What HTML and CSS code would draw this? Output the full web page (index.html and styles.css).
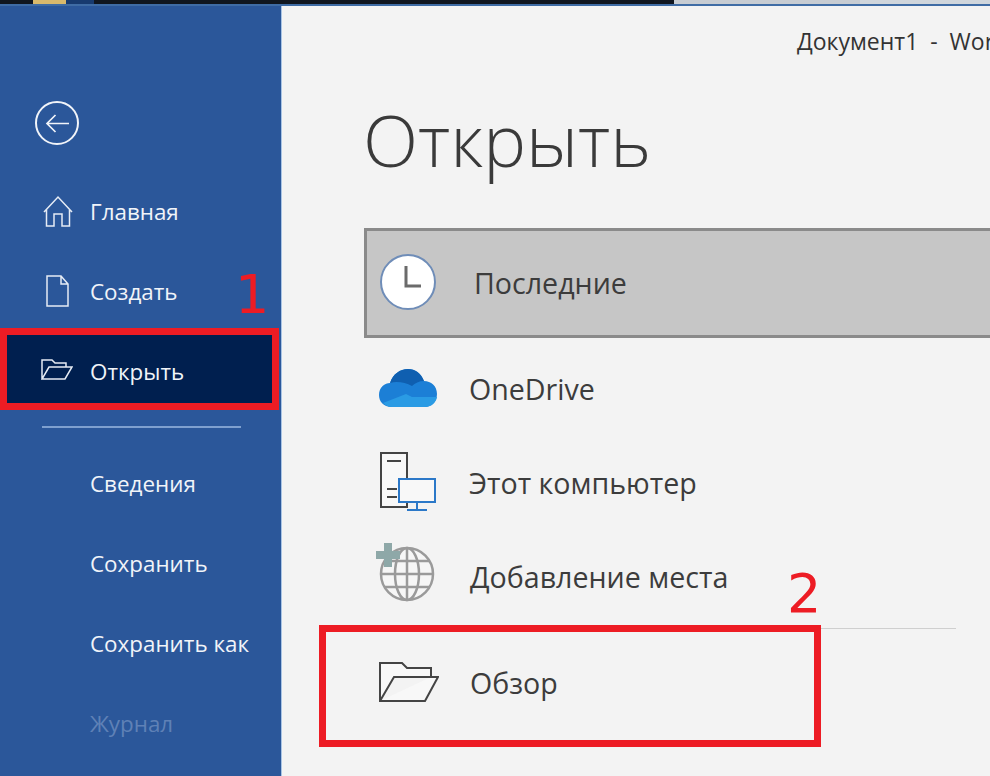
FILE: index.html
```html
<!DOCTYPE html>
<html lang="ru">
<head>
<meta charset="utf-8">
<title>Открыть</title>
<link rel="stylesheet" href="styles.css">
</head>
<body>
<div class="topstrip">
  <div class="strip-gold"></div>
  <div class="strip-navy"></div>
  <div class="strip-fill"></div>
  <div class="strip-tab"></div>
  <div class="strip-end"></div>
</div>
<div class="app">
  <nav class="side">
    <div class="back">
      <svg width="44" height="44" viewBox="0 0 44 44" fill="none" stroke="#f1f4f9" stroke-width="2"><circle cx="22" cy="22" r="21"/><path d="M34 22.500H12M20.500 14l-8.500 8.500 8.500 8.500" stroke-width="1.700"/></svg>
    </div>
    <a class="nav-item nav-home">
      <svg class="nav-icon" width="32" height="34" viewBox="0 0 32 34" fill="none" stroke="#e6ecf5" stroke-width="1.500"><path d="M2 18L16 3l14 15M4.500 15.500V32H12V20h8v12h7.500V15.500"/></svg>
      <span>Главная</span>
    </a>
    <a class="nav-item nav-new">
      <svg class="nav-icon" width="32" height="34" viewBox="0 0 32 34" fill="none" stroke="#e6ecf5" stroke-width="1.500"><path d="M5 2h14l7 8v22H5zM19 2v8h7"/></svg>
      <span>Создать</span>
    </a>
    <a class="nav-item active">
      <svg class="nav-icon" width="32" height="24" viewBox="0 0 32 24" fill="none" stroke="#e6ecf5" stroke-width="1.500"><path d="M1 22V3h10l3 3h11v4M1 22h23l7-12H8z"/></svg>
      <span>Открыть</span>
    </a>
    <div class="side-rule"></div>
    <a class="nav-item plain"><span>Сведения</span></a>
    <a class="nav-item plain"><span>Сохранить</span></a>
    <a class="nav-item plain"><span>Сохранить как</span></a>
    <a class="nav-item plain disabled"><span>Журнал</span></a>
    <div class="mark mark-one">1</div>
  </nav>
  <main class="main">
    <div class="doc-title">Документ1&nbsp; -&nbsp; Word</div>
    <h1 class="heading">Открыть</h1>
    <div class="loc selected">
      <svg class="loc-icon" width="58" height="58" viewBox="0 0 58 58"><circle cx="29" cy="29" r="27" fill="#fff" stroke="#6f8db8" stroke-width="2"/><path d="M27 13v20h15" fill="none" stroke="#6b6b6b" stroke-width="3"/></svg>
      <span>Последние</span>
    </div>
    <div class="loc loc-drive">
      <svg class="loc-icon" width="58" height="40" viewBox="0 0 58 40"><path d="M13 39C4 39 0 33 0 27 0 19 6 15 11 15 14 6 21 1 29 1 36 1 42 5 45 13 52 13 58 18 58 26 58 34 52 39 46 39z" fill="#1c7fd6"/><path d="M11 15C14 6 21 1 29 1 36 1 42 5 45 13 40 13 36 15 33 18 26 14 17 13 11 15z" fill="#0f5fb0"/><path d="M13 39C9 39 6 37 4 35L27 26 33 29 58 29C57 35 52 39 46 39z" fill="#2a9be4"/></svg>
      <span>OneDrive</span>
    </div>
    <div class="loc loc-pc">
      <svg class="loc-icon" width="58" height="62" viewBox="0 0 58 62" fill="none"><path d="M2 2h26v54H2z" fill="#f8f8f8" stroke="#444" stroke-width="2"/><path d="M8 10h14M8 38h10M8 46h10" stroke="#444" stroke-width="2"/><rect x="20" y="28" width="36" height="23" fill="#f8f8f8" stroke="#2b78c8" stroke-width="2"/><path d="M38 51v7M28 59h20" stroke="#2b78c8" stroke-width="2"/></svg>
      <span>Этот компьютер</span>
    </div>
    <div class="loc loc-add">
      <svg class="loc-icon" width="60" height="60" viewBox="0 0 60 60" fill="none" stroke="#9a9a9a" stroke-width="2.500"><circle cx="31" cy="31" r="26" fill="#f6f6f6"/><ellipse cx="31" cy="31" rx="12" ry="26"/><path d="M5 31h52M9 18h44M9 44h44M31 5v52"/><path d="M8 0h8v8h8v8h-8v8H8v-8H0V8h8z" fill="#8ea8a8" stroke="none"/></svg>
      <span>Добавление места</span>
    </div>
    <div class="loc-rule"></div>
    <div class="loc loc-browse">
      <svg class="loc-icon" width="60" height="42" viewBox="0 0 60 42" fill="none" stroke="#444" stroke-width="2"><path d="M1 40V2h22l5 5h24v9M1 40h45l13-24H15z" fill="#f8f8f8"/></svg>
      <span>Обзор</span>
    </div>
    <div class="mark mark-two">2</div>
    <div class="frame frame-browse"></div>
  </main>
</div>
</body>
</html>
```
FILE: styles.css
```css
* { box-sizing: border-box; }
html, body { margin: 0; padding: 0; }
body { width: 990px; height: 776px; overflow: hidden; background: #f3f3f3; font-family: "Open Sans", "Noto Sans", sans-serif; color: #3c3c3c; }
.topstrip { display: flex; height: 6px; background: #10161f; border-bottom: 2px solid #3f6ca5; }
.strip-gold { width: 33px; margin-left: 33px; background: #d8b96c; }
.strip-navy { width: 28px; background: #173a6f; }
.strip-fill { flex: 1; }
.strip-tab { width: 186px; background: #c7ccd2; }
.strip-end { width: 130px; background: #d0d6dc; }
.app { display: flex; height: 770px; }
.side { position: relative; width: 282px; flex: none; background: #2b579a; border-right: 1px solid #a9c4e4; color: #f1f4f9; font-size: 22.4px; }
.back { height: 165px; padding: 95px 0 0 35px; }
.nav-item { display: flex; align-items: center; height: 80px; padding-left: 42px; gap: 16px; }
.nav-item span { display: block; }
.nav-icon { flex: none; width: 32px; }
.nav-new { height: 77px; padding-top: 3px; }
.nav-item.active { height: 82px; margin: 0 2px 0 0; padding: 4px 0 0 34px; gap: 17px; background: #001f4f; border: 7px solid #ed1c24; }
.active .nav-icon { margin-top: -4px; }
.side-rule { height: 2px; margin: 16px 40px 15px 42px; background: #7fa0cf; }
.nav-item.plain { padding-left: 90px; }
.disabled { color: #5f81b6; }
.mark { position: absolute; color: #ed1c24; font-size: 54px; line-height: 1; font-family: "DejaVu Sans", sans-serif; }
.mark-one { left: 235px; top: 262px; }
.main { position: relative; flex: 1; padding-left: 82px; }
.doc-title { position: absolute; left: 515px; top: 19px; font-size: 23px; white-space: nowrap; color: #333; }
.heading { margin: 0 0 0 -1px; padding-top: 88px; height: 222px; font-size: 72px; line-height: 90px; font-weight: 300; color: #3a3a3a; }
.loc { display: flex; align-items: center; font-size: 28.6px; color: #3c3c3c; gap: 32px; padding-left: 15px; }
.loc-icon { flex: none; }
.selected { height: 110px; background: #c6c6c6; border: 3px solid #8a8a8a; border-right: none; gap: 37px; padding-left: 12px; padding-bottom: 2px; }
.loc-drive { height: 100px; }
.loc-pc { height: 88px; }
.loc-add { height: 100px; }
.loc-add .loc-icon { margin: -6px 2px 0 -3px; }
.loc-rule { height: 1px; margin: 2px 34px 0 0; background: #cfcfcf; }
.loc-browse { height: 106px; gap: 31px; }
.mark-two { left: 505px; top: 561px; }
.frame { position: absolute; border: 7px solid #ed1c24; }
.frame-browse { left: 37px; top: 619px; width: 502px; height: 122px; }
```
